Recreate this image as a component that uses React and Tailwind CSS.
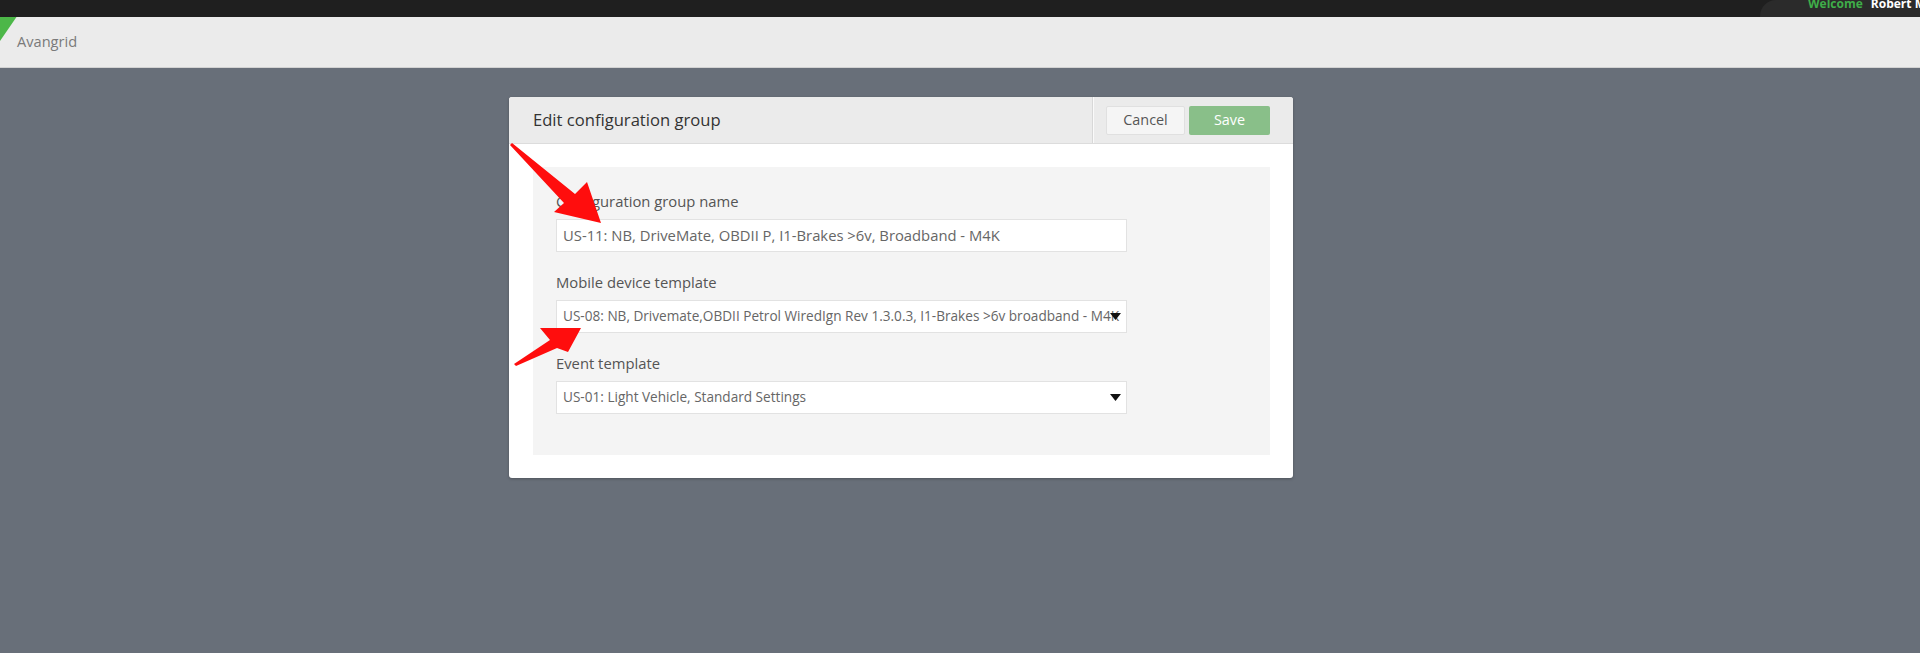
import React from "react";

const font = { fontFamily: '"Open Sans", "Noto Sans", Arial, sans-serif' };

function Field({ label, value, select, last }) {
  return (
    <div className={last ? "" : "mb-[20px]"}>
      <div className="h-5 leading-5 text-[14.8px] text-[#555] mb-2 whitespace-nowrap">{label}</div>
      <div className="relative h-[33px] w-[571px] bg-white border border-[#e2e2e2] flex items-center overflow-hidden">
        <div
          className={
            select
              ? "pl-[6px] pr-[2px] text-[13.6px] text-[#666] whitespace-nowrap overflow-hidden"
              : "pl-[6px] pr-[2px] text-[14.8px] text-[#666] whitespace-nowrap overflow-hidden"
          }
        >
          {value}
        </div>
        {select && (
          <svg className="absolute right-[5px] top-[12px]" width="11" height="8" viewBox="0 0 11 8">
            <path d="M0 0 L11 0 L5.5 7 Z" fill="#111" />
          </svg>
        )}
      </div>
    </div>
  );
}

export default function App() {
  return (
    <div className="relative w-[1920px] h-[653px] flex flex-col bg-[#686f79] overflow-hidden" style={font}>
      {/* top bar */}
      <div className="h-[17px] bg-[#1f1f1f] flex justify-end shrink-0">
        <div className="w-[160px] h-full bg-[#2b2b2b] rounded-tl-[16px] pl-[48px] overflow-hidden">
          <div className="-mt-[2px] leading-[12px] text-[12px] font-bold whitespace-nowrap">
            <span className="text-[#3fae49]">Welcome</span>
            <span className="text-white ml-[8px]">Robert M</span>
          </div>
        </div>
      </div>
      {/* header */}
      <div className="relative h-[51px] bg-[#ebebeb] border-b border-[#d2d2d2] flex items-center pl-[17px] shrink-0">
        <svg className="absolute left-0 top-0" width="17" height="25" viewBox="0 0 17 25">
          <path d="M0 0 L16.5 0 L0 24 Z" fill="#4cb748" />
        </svg>
        <span className="text-[14.6px] text-[#7a7a7a]">Avangrid</span>
      </div>
      {/* main */}
      <div className="flex-1 pt-[29px]">
        <div className="ml-[509px] w-[784px] bg-white rounded-[3px] shadow-[0_1px_3px_rgba(0,0,0,0.25)] overflow-hidden">
          <div className="h-[47px] bg-[#ebebeb] border-b border-[#dcdcdc] flex items-stretch">
            <div className="flex-1 flex items-center pl-[24px] text-[16.6px] text-[#333]">
              Edit configuration group
            </div>
            <div className="border-l border-[#d8d8d8] shadow-[inset_1px_0_0_#fafafa] flex items-center pl-[13px] pr-[23px] gap-[4px]">
              <button className="w-[79px] h-[29px] bg-[#f5f5f5] border border-[#e0e0e0] rounded-[2px] text-[14.4px] text-[#555]">
                Cancel
              </button>
              <button className="w-[81px] h-[29px] bg-[#89bf89] rounded-[2px] text-[14.4px] text-white">
                Save
              </button>
            </div>
          </div>
          <div className="pt-[23px] pl-[24px] pr-[23px] pb-[23px]">
            <div className="bg-[#f4f4f4] pl-[23px] pt-[24px] pb-[41px]">
              <Field label="Configuration group name" value="US-11: NB, DriveMate, OBDII P, I1-Brakes >6v, Broadband - M4K" />
              <Field
                label="Mobile device template"
                value="US-08: NB, Drivemate,OBDII Petrol WiredIgn Rev 1.3.0.3, I1-Brakes >6v broadband - M4K"
                select
              />
              <Field label="Event template" value="US-01: Light Vehicle, Standard Settings" select last />
            </div>
          </div>
        </div>
      </div>
      {/* annotation arrows */}
      <svg className="absolute left-0 top-0 pointer-events-none" width="1920" height="653" viewBox="0 0 1920 653">
        <polygon
          points="510,145 564,203 554,212 601,223 587,182 575,194 512,143"
          fill="#ff0d0d"
        />
        <polygon
          points="514,364 550,340 540,328 581,328 568,352 557,348 516,366"
          fill="#ff0d0d"
        />
      </svg>
    </div>
  );
}
